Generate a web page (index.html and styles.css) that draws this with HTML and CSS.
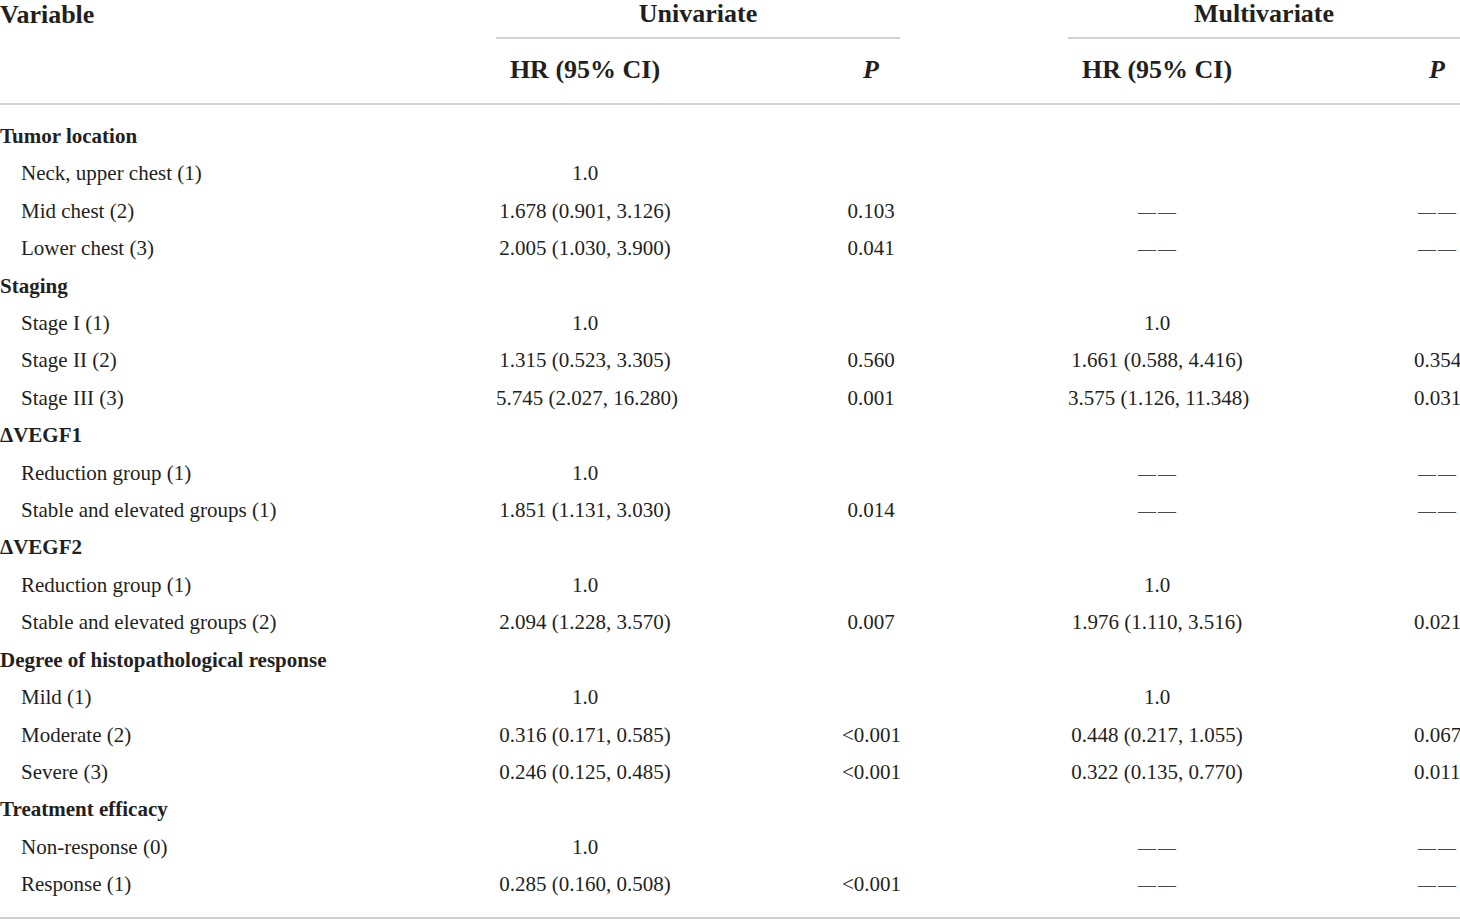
FILE: index.html
```html
<!DOCTYPE html>
<html lang="en">
<head>
<meta charset="utf-8">
<title>Cox regression</title>
<link rel="stylesheet" href="styles.css">
</head>
<body>
<table class="cox">
  <colgroup>
    <col class="c-var"><col class="c-hr"><col class="c-gap"><col class="c-p"><col class="c-gap"><col class="c-hr"><col class="c-gap"><col class="c-p2">
  </colgroup>
  <thead>
    <tr class="h1">
      <th class="left">Variable</th>
      <th colspan="3" class="group">Univariate</th>
      <th></th>
      <th colspan="3" class="group">Multivariate</th>
    </tr>
    <tr class="h2">
      <th></th>
      <th>HR (95% CI)</th>
      <th></th>
      <th><i>P</i></th>
      <th></th>
      <th>HR (95% CI)</th>
      <th></th>
      <th><i>P</i></th>
    </tr>
  </thead>
  <tbody>
    <tr class="sec"><td>Tumor location</td><td></td><td></td><td></td><td></td><td></td><td></td><td></td></tr>
    <tr><td class="sub">Neck, upper chest (1)</td><td>1.0</td><td></td><td></td><td></td><td></td><td></td><td></td></tr>
    <tr><td class="sub">Mid chest (2)</td><td>1.678 (0.901, 3.126)</td><td></td><td>0.103</td><td></td><td><span class="na">——</span></td><td></td><td><span class="na">——</span></td></tr>
    <tr><td class="sub">Lower chest (3)</td><td>2.005 (1.030, 3.900)</td><td></td><td>0.041</td><td></td><td><span class="na">——</span></td><td></td><td><span class="na">——</span></td></tr>
    <tr class="sec"><td>Staging</td><td></td><td></td><td></td><td></td><td></td><td></td><td></td></tr>
    <tr><td class="sub">Stage I (1)</td><td>1.0</td><td></td><td></td><td></td><td>1.0</td><td></td><td></td></tr>
    <tr><td class="sub">Stage II (2)</td><td>1.315 (0.523, 3.305)</td><td></td><td>0.560</td><td></td><td>1.661 (0.588, 4.416)</td><td></td><td>0.354</td></tr>
    <tr><td class="sub">Stage III (3)</td><td>5.745 (2.027, 16.280)</td><td></td><td>0.001</td><td></td><td>3.575 (1.126, 11.348)</td><td></td><td>0.031</td></tr>
    <tr class="sec"><td>ΔVEGF1</td><td></td><td></td><td></td><td></td><td></td><td></td><td></td></tr>
    <tr><td class="sub">Reduction group (1)</td><td>1.0</td><td></td><td></td><td></td><td><span class="na">——</span></td><td></td><td><span class="na">——</span></td></tr>
    <tr><td class="sub">Stable and elevated groups (1)</td><td>1.851 (1.131, 3.030)</td><td></td><td>0.014</td><td></td><td><span class="na">——</span></td><td></td><td><span class="na">——</span></td></tr>
    <tr class="sec"><td>ΔVEGF2</td><td></td><td></td><td></td><td></td><td></td><td></td><td></td></tr>
    <tr><td class="sub">Reduction group (1)</td><td>1.0</td><td></td><td></td><td></td><td>1.0</td><td></td><td></td></tr>
    <tr><td class="sub">Stable and elevated groups (2)</td><td>2.094 (1.228, 3.570)</td><td></td><td>0.007</td><td></td><td>1.976 (1.110, 3.516)</td><td></td><td>0.021</td></tr>
    <tr class="sec"><td>Degree of histopathological response</td><td></td><td></td><td></td><td></td><td></td><td></td><td></td></tr>
    <tr><td class="sub">Mild (1)</td><td>1.0</td><td></td><td></td><td></td><td>1.0</td><td></td><td></td></tr>
    <tr><td class="sub">Moderate (2)</td><td>0.316 (0.171, 0.585)</td><td></td><td>&lt;0.001</td><td></td><td>0.448 (0.217, 1.055)</td><td></td><td>0.067</td></tr>
    <tr><td class="sub">Severe (3)</td><td>0.246 (0.125, 0.485)</td><td></td><td>&lt;0.001</td><td></td><td>0.322 (0.135, 0.770)</td><td></td><td>0.011</td></tr>
    <tr class="sec"><td>Treatment efficacy</td><td></td><td></td><td></td><td></td><td></td><td></td><td></td></tr>
    <tr><td class="sub">Non-response (0)</td><td>1.0</td><td></td><td></td><td></td><td><span class="na">——</span></td><td></td><td><span class="na">——</span></td></tr>
    <tr><td class="sub">Response (1)</td><td>0.285 (0.160, 0.508)</td><td></td><td>&lt;0.001</td><td></td><td><span class="na">——</span></td><td></td><td><span class="na">——</span></td></tr>
  </tbody>
</table>
</body>
</html>
```
FILE: styles.css
```css
html, body {
  margin: 0;
  padding: 0;
  background: #ffffff;
}

.cox {
  width: 1460px;
  table-layout: fixed;
  border-collapse: collapse;
  font-family: "Liberation Serif", "Times New Roman", serif;
  color: #231f20;
}

.c-var { width: 496px; }
.c-hr { width: 178px; }
.c-gap { width: 168px; }
.c-p { width: 58px; }
.c-p2 { width: 46px; }

.cox th, .cox td {
  padding: 0;
  text-align: center;
  white-space: nowrap;
  overflow: visible;
}

.cox thead th {
  font-size: 26px;
  font-weight: bold;
  line-height: 24px;
}

.cox .h1 th {
  line-height: 28px;
  padding-bottom: 9px;
}

.cox .h1 th.left {
  text-align: left;
}

.cox .h1 th.group {
  border-bottom: 2px solid #d2d2d2;
}

.cox .h2 th {
  padding-top: 19px;
  padding-bottom: 21px;
  border-bottom: 2px solid #d2d2d2;
}

.cox tbody td {
  font-size: 21px;
  line-height: 37.4px;
}

.cox tbody tr:first-child td {
  padding-top: 13px;
}

.cox tbody tr:last-child td {
  padding-bottom: 13px;
  border-bottom: 2px solid #cfcfcf;
}

.cox tbody td:first-child {
  text-align: left;
}

.cox .sec td:first-child {
  font-weight: bold;
}

.cox td.sub {
  padding-left: 21px;
}

.cox .na {
  font-size: 18px;
  line-height: 1;
  letter-spacing: 2px;
  margin-right: -2px;
  color: #4a4a4a;
}
```
